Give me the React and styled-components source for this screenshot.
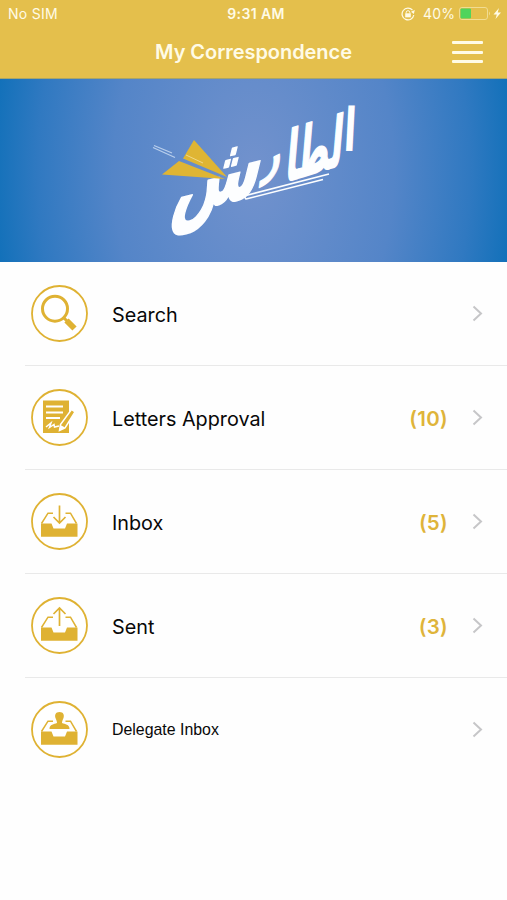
import React from 'react';
import styled, { createGlobalStyle } from 'styled-components';

const GlobalStyle = createGlobalStyle`
  * {
    box-sizing: border-box;
  }

  body {
    margin: 0;
    background: #fefefe;
    font-family: Inter, 'Liberation Sans', sans-serif;
  }
`;

const Screen = styled.main`
  width: 100%;
  min-height: 900px;
  background: #fefefe;
`;

const Header = styled.header`
  height: 79px;
  background: #e4bf4c;
  color: #fffbe6;
  border-bottom: 1px solid #a9a568;
`;

const StatusBar = styled.div`
  display: grid;
  grid-template-columns: 1fr auto 1fr;
  align-items: center;
  height: 27px;
  padding: 0 5px 0 8px;
  font-size: 14px;
  letter-spacing: 0.1px;
`;

const Carrier = styled.span`
  letter-spacing: 0.3px;
`;

const Clock = styled.span`
  margin-left: 2px;
  font-weight: 600;
  letter-spacing: 0.4px;
`;

const StatusRight = styled.div`
  display: flex;
  align-items: center;
  justify-content: flex-end;
`;

const LockIcon = styled.svg`
  margin-right: 8px;
`;

const BatteryIcon = styled.svg`
  margin-left: 4px;
`;

const NavBar = styled.div`
  display: grid;
  grid-template-columns: 1fr auto 1fr;
  align-items: center;
  height: 50px;
  padding: 0 24px;
`;

const Title = styled.h1`
  grid-column: 2;
  margin: 0;
  font-size: 20px;
  font-weight: 600;
  line-height: 24px;
  letter-spacing: -0.05px;
  white-space: nowrap;
`;

const MenuButton = styled.button`
  justify-self: end;
  display: flex;
  flex-direction: column;
  justify-content: space-between;
  width: 31px;
  height: 22px;
  padding: 0;
  border: none;
  background: none;
  cursor: pointer;
`;

const MenuLine = styled.span`
  height: 3px;
  border-radius: 1px;
  background: #fffbe6;
`;

const Banner = styled.section`
  height: 183px;
  background: radial-gradient(ellipse 270px 420px at 50% 50%, #7292cd 0%, #5485c8 52%, #3079c1 80%, #0c6fb8 100%);
`;

const Logo = styled.svg`
  display: block;
`;

const LogoText = styled.text`
  font-family: 'DejaVu Sans', sans-serif;
  font-weight: 700;
  fill: #fdfeff;
  stroke: #fdfeff;
  stroke-linejoin: round;
  stroke-width: ${({ $stroke }) => $stroke || 0};
`;

const List = styled.ul`
  margin: 0;
  padding: 0 0 0 25px;
  list-style: none;
`;

const Row = styled.li`
  display: flex;
  align-items: center;
  height: 104px;
  padding: 0 24px 0 6px;
  border-bottom: 1px solid ${({ $last }) => ($last ? 'transparent' : '#e9e9e9')};
  cursor: pointer;
`;

const Label = styled.span`
  flex: 1;
  margin-left: 24px;
  padding-top: ${({ $small }) => ($small ? '1px' : '2px')};
  color: #080808;
  font-family: ${({ $small }) => ($small ? "'Liberation Sans', sans-serif" : 'inherit')};
  font-size: ${({ $small }) => ($small ? '15.9px' : '19.8px')};
  line-height: 26px;
`;

const Count = styled.span`
  margin-right: 24px;
  padding-top: 2px;
  color: #dfb43a;
  font-size: 20.5px;
  font-weight: 600;
  letter-spacing: 0.3px;
`;

const GOLD = '#dfb233';

const Tray = () => (
  <>
    <path d="M10.5 30.500 L17 20.200 H22 M34.500 20.200 H39.500 L45.500 30.500" fill="none" stroke={GOLD} strokeWidth="1.5" />
    <path d="M10 30.500 H20.500 L22.500 35.500 H34 L36 30.500 H46.500 V43.700 H10 Z" fill={GOLD} />
  </>
);

const glyphs = {
  search: (
    <>
      <circle cx="24" cy="23.700" r="12.500" fill="none" stroke={GOLD} strokeWidth="3" />
      <path d="M33 33 L36 36" stroke={GOLD} strokeWidth="3" />
      <path d="M35.500 35.500 L43.500 43.500" stroke={GOLD} strokeWidth="6" />
    </>
  ),
  letters: (
    <>
      <path d="M12 11.500 H38 V44 H12 Z" fill={GOLD} />
      <path d="M15 17.500 H32 M15 23.500 H32 M15 29 H29" stroke="#fff" strokeWidth="2" />
      <path
        d="M15 38 L20 34 L18.500 38.500 L23 35.500 L23.500 38 L28 37"
        fill="none"
        stroke="#fff"
        strokeWidth="1.5"
      />
      <path d="M40.500 20.500 L44 23 L34 39 L28.500 41.500 L29.500 35.500 Z" fill={GOLD} stroke="#fff" strokeWidth="1.5" />
      <path d="M29.500 36 L34 38.500 L28.500 41.500 Z" fill="#fff" />
    </>
  ),
  inbox: (
    <>
      <Tray />
      <path d="M28.500 12.500 V29.500 M22.500 24 L28.500 30 L34.500 24" fill="none" stroke={GOLD} strokeWidth="1.7" />
    </>
  ),
  sent: (
    <>
      <Tray />
      <path d="M28.500 29 V12 M22.500 17 L28.500 11 L34.500 17" fill="none" stroke={GOLD} strokeWidth="1.7" />
    </>
  ),
  delegate: (
    <>
      <Tray />
      <path
        d="M28.500 11 C32.500 11 33.500 14 32.500 17 C31.800 19 31 20 31 22 C34 23.500 38.500 23 38.500 28 H18.500 C18.500 23 23 23.500 26 22 C26 20 25.200 19 24.500 17 C23.500 14 24.500 11 28.500 11 Z"
        fill={GOLD}
      />
    </>
  ),
};

const RowIcon = ({ name }) => (
  <svg width="57" height="57" viewBox="0 0 57 57">
    <circle cx="28.500" cy="28.500" r="27.500" fill="#fff" stroke={GOLD} strokeWidth="1.8" />
    {glyphs[name]}
  </svg>
);

const Chevron = () => (
  <svg width="11" height="17" viewBox="0 0 11 17">
    <path d="M1.500 1.500 L9 8.500 L1.500 15.500" fill="none" stroke="#c6c6c8" strokeWidth="2" />
  </svg>
);

const items = [
  { icon: 'search', label: 'Search' },
  { icon: 'letters', label: 'Letters Approval', count: 10 },
  { icon: 'inbox', label: 'Inbox', count: 5 },
  { icon: 'sent', label: 'Sent', count: 3 },
  { icon: 'delegate', label: 'Delegate Inbox', small: true },
];

const App = () => (
  <Screen>
    <GlobalStyle />
    <Header>
      <StatusBar>
        <Carrier>No SIM</Carrier>
        <Clock>9:31 AM</Clock>
        <StatusRight>
          <LockIcon width="14" height="14" viewBox="0 0 14 14">
            <path d="M11.500 3.200 A5.900 5.900 0 1 0 12.800 8" fill="none" stroke="#fffbe6" strokeWidth="1.200" />
            <path d="M13.800 3 L12.800 7 L10 4.800 Z" fill="#fffbe6" />
            <rect x="4.200" y="6.300" width="5.600" height="4" fill="#fffbe6" />
            <path d="M5.200 6.500 V5.500 A1.800 1.800 0 0 1 8.800 5.500 V6.500" fill="none" stroke="#fffbe6" />
          </LockIcon>
          <span>40%</span>
          <BatteryIcon width="43" height="14" viewBox="0 0 43 14">
            <rect x="0.500" y="0.500" width="28" height="12" rx="2.500" fill="none" stroke="#f1dc92" strokeWidth="1" />
            <rect x="1.500" y="1.500" width="10.500" height="10" rx="1" fill="#4fd45c" />
            <path d="M30 4.500 Q32 6.500 30 8.500 Z" fill="#f1dc92" />
            <path d="M40 1 L34.500 7.500 H37.800 L36.500 12 L42 5.500 H38.700 Z" fill="#fffbe6" />
          </BatteryIcon>
        </StatusRight>
      </StatusBar>
      <NavBar>
        <Title>My Correspondence</Title>
        <MenuButton aria-label="Menu">
          <MenuLine />
          <MenuLine />
          <MenuLine />
        </MenuButton>
      </NavBar>
    </Header>

    <Banner>
      <Logo width="507" height="183" viewBox="0 79 507 183">
        <LogoText fontSize="60" transform="translate(343 151) skewX(-3) scale(0.6 1)">ا</LogoText>
        <LogoText fontSize="68" $stroke="2" transform="translate(285 182) skewY(-17) skewX(-5) scale(0.48 1)">لطا</LogoText>
        <LogoText fontSize="54" $stroke="1.5" transform="translate(262 175) skewY(-26) skewX(-8) scale(0.6 0.85)">ر</LogoText>
        <LogoText fontSize="98" $stroke="2" transform="translate(170 216) rotate(-14) skewX(-28) scale(0.66 0.88)">ش</LogoText>
        {/* paper plane with its trail */}
        <path d="M194 140 L227 177 L183 158.500 Z" fill="#dfb534" />
        <path d="M179 161 L225 179 L162 174.500 Z" fill="#dfb534" />
        <path d="M186 155 L203 163" stroke="#f0d98a" strokeWidth="1" />
        <path d="M154 145.500 L172 153 M153 147.500 L175 157.500" stroke="#b9cfec" strokeWidth="1.200" />
        {/* double underline */}
        <path d="M244 196 L329 174 M246 199 L323 179.500 M244 195.500 L246 199.500" stroke="#fdfeff" strokeWidth="1.600" />
      </Logo>
    </Banner>

    <List>
      {items.map(({ icon, label, count, small }, i) => (
        <Row key={icon} $last={i === items.length - 1}>
          <RowIcon name={icon} />
          <Label $small={small}>{label}</Label>
          {count && <Count>({count})</Count>}
          <Chevron />
        </Row>
      ))}
    </List>
  </Screen>
);

export default App;
